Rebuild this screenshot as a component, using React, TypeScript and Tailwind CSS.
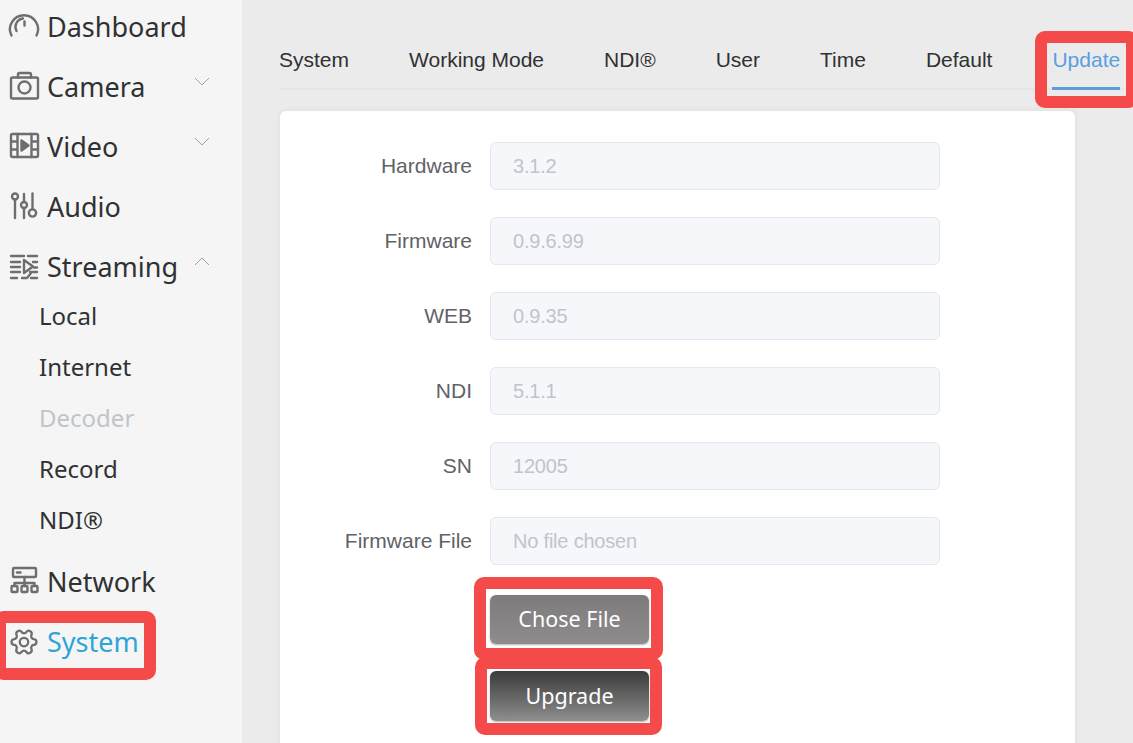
import type { ReactNode } from "react";

const ui = "font-['Noto_Sans','Open_Sans',sans-serif]";

function Icon({ children }: { children: ReactNode }) {
  return (
    <svg
      viewBox="0 0 40 40"
      className="h-10 w-10 shrink-0 text-[#6e6e6e]"
      fill="none"
      stroke="currentColor"
      strokeWidth="2.4"
      strokeLinecap="round"
      strokeLinejoin="round"
    >
      {children}
    </svg>
  );
}

const icons: Record<string, ReactNode> = {
  dashboard: (
    <>
      <path d="M7.5 28.5A14 14 0 1 1 32.5 28.5" />
      <path d="M12.5 24A8.5 8.5 0 0 1 19 11.5" />
      <path d="M20.5 14.5v4" />
    </>
  ),
  camera: (
    <>
      <rect x="7" y="10.5" width="27" height="21" rx="1.5" />
      <path d="M14 10.5V7.5a1.5 1.5 0 0 1 1.5-1.5h10a1.5 1.5 0 0 1 1.5 1.5v3" />
      <circle cx="20.5" cy="20.5" r="6" />
    </>
  ),
  video: (
    <>
      <rect x="7" y="7" width="27" height="23" rx="1.5" />
      <path d="M13.5 7v23M27.5 7v23M7 14.5h6.5M7 22.5h6.5M27.5 14.5H34M27.5 22.5H34" />
      <path d="M17.5 13.5l7 5-7 5z" fill="currentColor" />
    </>
  ),
  audio: (
    <>
      <circle cx="11" cy="9.5" r="3" />
      <path d="M11 12.5V31" />
      <path d="M20 7v8M20 21v10" />
      <circle cx="20" cy="18" r="3" />
      <path d="M28.5 6.5V22" />
      <circle cx="28.5" cy="26" r="3.6" />
    </>
  ),
  streaming: (
    <>
      <path d="M7 9h13M7 15h9M7 20h9M7 25h9M7 31h6" />
      <path d="M20 13l9 6.5-9 6.5z" />
      <path d="M24 9h9M29 15h4M30 20.5h3M26 25h7M18 31h5l4-5M27 31h6" />
    </>
  ),
  network: (
    <>
      <rect x="9" y="6" width="23" height="9" rx="1" />
      <path d="M13 10.5h3.5" />
      <path d="M20.5 15v6M10.5 24v-3h20v3M20.5 21v3" />
      <rect x="7.5" y="24" width="6" height="6" rx="1" />
      <rect x="17.5" y="24" width="6" height="6" rx="1" />
      <rect x="27.5" y="24" width="6" height="6" rx="1" />
    </>
  ),
  system: (
    <g transform="translate(5 5) scale(1.25) rotate(90 12 12)" strokeWidth="1.8">
      <path d="M9.671 4.136a2.34 2.34 0 0 1 4.659 0 2.34 2.34 0 0 0 3.319 1.915 2.34 2.34 0 0 1 2.33 4.033 2.34 2.34 0 0 0 0 3.831 2.34 2.34 0 0 1-2.33 4.033 2.34 2.34 0 0 0-3.319 1.915 2.34 2.34 0 0 1-4.659 0 2.34 2.34 0 0 0-3.32-1.915 2.34 2.34 0 0 1-2.33-4.033 2.34 2.34 0 0 0 0-3.831A2.34 2.34 0 0 1 6.35 6.051a2.34 2.34 0 0 0 3.319-1.915" />
      <circle cx="12" cy="12" r="3.4" />
    </g>
  ),
};

function Chevron({ up }: { up?: boolean }) {
  return (
    <svg viewBox="0 0 16 9" className="mb-3 ml-auto mr-[32px] h-[9px] w-4 text-[#a3a3a3]" fill="none" stroke="currentColor" strokeWidth="1">
      <path d={up ? "M1 8l7-7 7 7" : "M1 1l7 7 7-7"} />
    </svg>
  );
}

function NavRow({ icon, label, open, active }: { icon: string; label: string; open?: "up" | "down"; active?: boolean }) {
  return (
    <div className="flex h-[60px] items-center pl-1">
      <Icon>{icons[icon]}</Icon>
      <span className={`ml-[3px] text-[27px] ${active ? "text-[#2ea5d5]" : "text-[#303133]"}`}>{label}</span>
      {open && <Chevron up={open === "up"} />}
    </div>
  );
}

const subItems = ["Local", "Internet", "Decoder", "Record", "NDI®"];

function Sidebar() {
  return (
    <aside className={`${ui} h-full w-[242px] shrink-0 bg-[#f5f5f5]`}>
      <div className="-mt-[3px]">
        <NavRow icon="dashboard" label="Dashboard" />
        <NavRow icon="camera" label="Camera" open="down" />
        <NavRow icon="video" label="Video" open="down" />
        <NavRow icon="audio" label="Audio" />
        <NavRow icon="streaming" label="Streaming" open="up" />
        <div className="-mt-[7px] mb-[7px]">
          {subItems.map((item) => (
            <div
              key={item}
              className={`flex h-[51px] items-center pl-[39px] text-[24px] ${item === "Decoder" ? "text-[#c0c4cc]" : "text-[#303133]"}`}
            >
              {item}
            </div>
          ))}
        </div>
        <NavRow icon="network" label="Network" />
        <NavRow icon="system" label="System" active />
      </div>
    </aside>
  );
}

const tabs = ["System", "Working Mode", "NDI®", "User", "Time", "Default", "Update"];

const fields = [
  { label: "Hardware", value: "3.1.2" },
  { label: "Firmware", value: "0.9.6.99" },
  { label: "WEB", value: "0.9.35" },
  { label: "NDI", value: "5.1.1" },
  { label: "SN", value: "12005" },
  { label: "Firmware File", value: "No file chosen" },
];

function Field({ label, value }: { label: string; value: string }) {
  return (
    <div className="flex h-12 items-center">
      <label className="w-[192px] text-right text-[#606266]">{label}</label>
      <div className="ml-[18px] flex h-12 w-[450px] items-center rounded-md border border-[#e4e7ed] bg-[#f5f7fa] pl-[22px] text-[20px] tracking-[-0.2px] text-[#c0c4cc]">
        {value}
      </div>
    </div>
  );
}

// red marks drawn over the screenshot
function Mark({ className }: { className: string }) {
  return <div className={`absolute rounded-[10px] border-[12px] border-[#f44a4a] ${className}`} />;
}

export default function App() {
  return (
    <div className="relative flex h-[743px] w-[1133px] overflow-hidden bg-[#ebebeb]">
      <Sidebar />

      <main className="flex-1 pl-[37px] pr-2 pt-[45px] font-['Liberation_Sans',Arial,sans-serif] text-[21px]">
        <div className="flex h-[45px] gap-[60px] border-b-2 border-[#e3e6ea]">
          {tabs.map((tab) => (
            <div
              key={tab}
              className={`-mb-[2px] h-[45px] border-b-[3px] pb-[12px] leading-[30px] ${
                tab === "Update" ? "border-[#5a9ee0] text-[#5a9ee0]" : "border-transparent text-[#303133]"
              }`}
            >
              {tab}
            </div>
          ))}
        </div>

        <div className="ml-px mt-[21px] h-[700px] w-[795px] rounded-md bg-white pt-[31px] shadow-[0_0_6px_rgba(0,0,0,0.06)]">
          <div className="flex flex-col gap-[27px]">
            {fields.map((f) => (
              <Field key={f.label} label={f.label} value={f.value} />
            ))}
          </div>
          <div className={`${ui} ml-[210px] mt-[30px] flex w-[159px] flex-col gap-[27px] text-[21.5px] text-white`}>
            <button className="h-[49px] rounded-md bg-gradient-to-b from-[#7d7b7b] to-[#8e8c8c] shadow-[0_1px_2px_rgba(0,0,0,0.3)]">
              Chose File
            </button>
            <button className="h-[50px] rounded-md bg-gradient-to-b from-[#3c3c3c] to-[#8f8f8f] shadow-[0_1px_2px_rgba(0,0,0,0.3)]">
              Upgrade
            </button>
          </div>
        </div>
      </main>

      <Mark className="-left-[6px] top-[611px] h-[69px] w-[162px]" />
      <Mark className="left-[1035px] top-[31px] h-[77px] w-[103px]" />
      <Mark className="left-[474px] top-[577px] h-[83px] w-[189px]" />
      <Mark className="left-[475px] top-[657px] h-[78px] w-[187px]" />
    </div>
  );
}
